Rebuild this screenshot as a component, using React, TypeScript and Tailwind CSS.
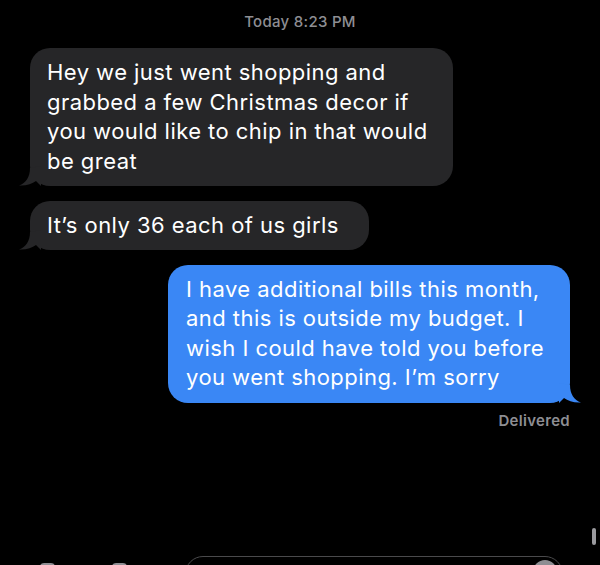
const GRAY = '#262628';
const BLUE = '#3a87f5';

const TailLeft = () => (
  <svg className="absolute -left-[11px] bottom-0" width="22" height="20" viewBox="0 0 22 20">
    <path d="M11 2 C11 11 7 17 0 19.5 C7 20 13 18 17 15 L22 20 L22 0 Z" fill={GRAY} />
  </svg>
);

const TailRight = () => (
  <svg className="absolute -right-[11px] bottom-0" width="22" height="20" viewBox="0 0 22 20">
    <path d="M11 2 C11 11 15 17 22 19.5 C15 20 9 18 5 15 L0 20 L0 0 Z" fill={BLUE} />
  </svg>
);

export default function App() {
  return (
    <div
      className="relative w-[600px] h-[565px] bg-black overflow-hidden flex flex-col text-white"
      style={{ fontFamily: 'Inter, "Liberation Sans", sans-serif' }}
    >
      {/* Timestamp */}
      <div className="pt-[12px] text-center text-[15px] leading-[20px] font-medium text-[#8e8e93] tracking-[0.3px]">
        Today 8:23 PM
      </div>

      <div className="flex flex-col mt-[16px] text-[22px] leading-[29.5px] tracking-[0.45px]">
        {/* Incoming */}
        <div className="relative ml-[30px] w-[423px] rounded-[20px] bg-[#262628] pl-[17px] pr-[12px] py-[10px]">
          Hey we just went shopping and grabbed a few Christmas decor if you would like to chip in that would be great
          <TailLeft />
        </div>

        <div className="relative ml-[30px] mt-[15px] w-fit rounded-[20px] bg-[#262628] pl-[17px] pr-[30px] py-[9.5px]">
          It’s only 36 each of us girls
          <TailLeft />
        </div>

        {/* Outgoing */}
        <div className="relative self-end mr-[30px] mt-[15px] w-[402px] rounded-[20px] bg-[#3a87f5] pl-[18px] pr-[12px] py-[10px]">
          I have additional bills this month, and this is outside my budget. I wish I could have told you before you went shopping. I’m sorry
          <TailRight />
        </div>

        <div className="self-end mr-[30px] mt-[8px] text-[15px] leading-[20px] font-semibold text-[#8e8e93] tracking-[0.3px]">
          Delivered
        </div>
      </div>

      {/* Input bar, mostly cut off */}
      <div className="mt-auto flex items-start h-[9px] pl-[40px]">
        <div className="mt-[7px] w-[15px] h-[12px] rounded-[4px] bg-[#8e8e93]" />
        <div className="ml-[57px] mt-[7px] w-[15px] h-[12px] rounded-[4px] bg-[#8e8e93]" />
        <div className="ml-[58px] w-[378px] h-[36px] rounded-[18px] border-[1.5px] border-[#4a4a4c] flex justify-end pr-[5px] pt-[3px]">
          <div className="w-[24px] h-[24px] rounded-full bg-[#8e8e93]" />
        </div>
      </div>

      {/* Scroll indicator */}
      <div className="absolute left-[592px] top-[528px] w-[4px] h-[17px] rounded-full bg-[#9a9a9e]" />
    </div>
  );
}
